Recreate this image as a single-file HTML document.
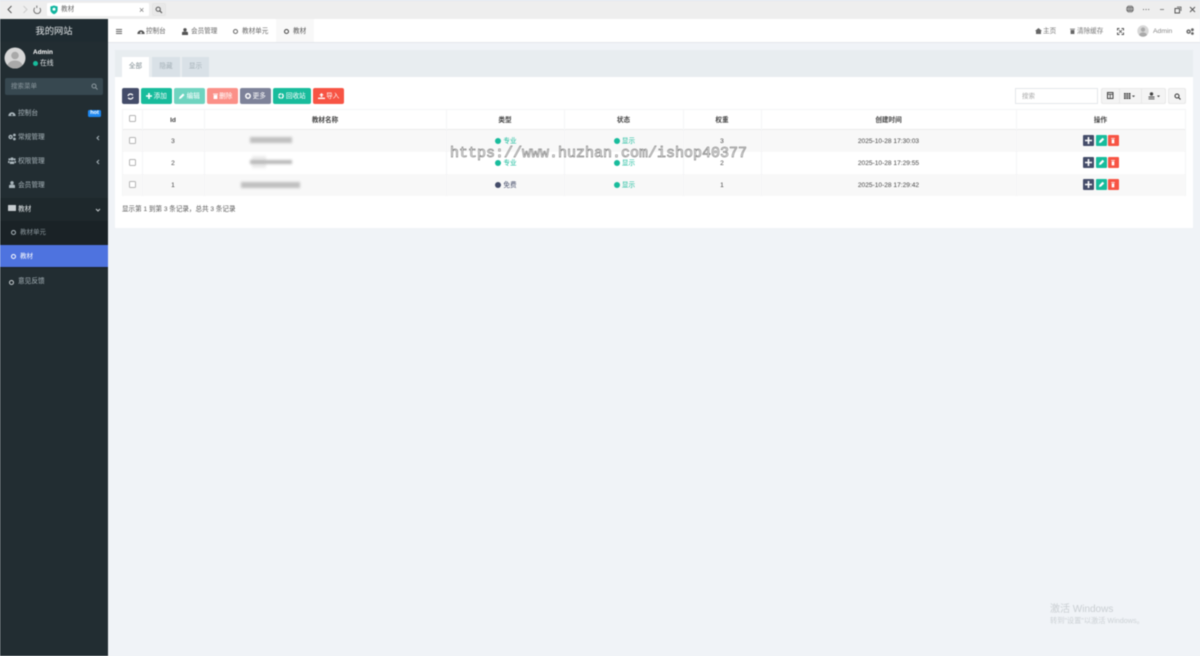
<!DOCTYPE html>
<html lang="zh-CN">
<head>
<meta charset="utf-8">
<title>教材</title>
<style>
html,body{margin:0;padding:0;width:1200px;height:656px;overflow:hidden;background:#f0f3f7}
body{font-family:"Liberation Sans","Noto Sans CJK SC",sans-serif;font-size:6.6px;color:#444;position:relative}
.a{position:absolute;white-space:nowrap}
#root{position:absolute;left:0;top:0;width:1200px;height:656px;filter:blur(.4px)}
.btn{position:absolute;top:88px;height:16px;border-radius:2px;color:#fff;font-size:6.6px;line-height:17px;text-align:center;white-space:nowrap}
.btn svg{display:inline-block;vertical-align:-1px;margin-right:1.5px}
.nav{position:absolute;left:18px;color:#a9b5bb;font-size:6.7px;line-height:10px;white-space:nowrap}
.ico{position:absolute}
.th{position:absolute;top:109px;height:19px;line-height:19px;text-align:center;font-weight:bold;font-size:6.6px;color:#444;padding-top:2px}
.td{position:absolute;text-align:center;font-size:6.6px;color:#444;line-height:10px}
.cb{position:absolute;left:129px;width:5px;height:5px;border:1px solid #b5b5b5;border-radius:1.5px;background:#fff}
.dot{display:inline-block;width:6px;height:6px;border-radius:50%;vertical-align:-.5px;margin-right:2px}
.act{position:absolute;width:11px;height:11px;border-radius:1px}
.vl{position:absolute;top:109px;height:87px;width:1px;background:#f4f5f6}
.blur{position:absolute;background:#c0c0c0;filter:blur(1.2px)}
</style>
</head>
<body>
<div id="root">
<!-- browser bar -->
<div class="a" style="left:0;top:0;width:1200px;height:19px;background:#eeeeee;border-top:1px solid #e3e8f2;box-sizing:border-box"></div>
<svg class="ico" style="left:0;top:0" width="48" height="19" fill="none">
<path d="M11.5 6 L8 9.5 L11.5 13" stroke="#555" stroke-width="1"/>
<path d="M23.5 6 L27 9.5 L23.5 13" stroke="#ccc" stroke-width="1"/>
<path d="M39.8 8 A3.4 3.4 0 1 1 34.8 7.8" stroke="#666" stroke-width=".9"/>
<path d="M36.8 5.6 L36.8 8" stroke="#666" stroke-width=".9"/>
</svg>
<div class="a" style="left:47px;top:3px;width:102px;height:13px;background:#fff;border-radius:1px"></div>
<svg class="ico" style="left:50px;top:5px" width="9" height="10"><path d="M4 .5 L7.6 1.5 L7.6 5 Q7.4 7.8 4 9.3 Q.6 7.8 .4 5 L.4 1.5Z" fill="#12b5a0"/><circle cx="4" cy="4.2" r="1.5" fill="#fff"/></svg>
<div class="a" style="left:61px;top:5px;font-size:6.6px;line-height:10px;color:#666">教材</div>
<div class="a" style="left:139px;top:4px;font-size:9px;line-height:12px;color:#777">×</div>
<div class="a" style="left:152px;top:3px;width:14px;height:13px;background:#e8e8e8;border-radius:2px;border:1px solid #e4e4e4;box-sizing:border-box"></div>
<svg class="ico" style="left:155px;top:6px" width="8" height="8" fill="none"><circle cx="3.2" cy="3.2" r="2.1" stroke="#555"/><path d="M4.8 4.8 L7 7" stroke="#555" stroke-width="1.1"/></svg>
<svg class="ico" style="left:1125px;top:4px" width="10" height="10" fill="none"><circle cx="5" cy="5" r="3.8" fill="#666"/><path d="M1.2 5 H8.8 M5 1.2 V8.8" stroke="#ddd" stroke-width=".5"/><ellipse cx="5" cy="5" rx="1.8" ry="3.8" stroke="#ddd" stroke-width=".5"/></svg>
<div class="a" style="left:1143px;top:8.5px;width:1.2px;height:1.2px;background:#666;box-shadow:2.6px 0 #666,5.2px 0 #666"></div>
<div class="a" style="left:1160px;top:9px;width:4px;height:1px;background:#888"></div>
<svg class="ico" style="left:1174px;top:6px" width="8" height="8" fill="none"><rect x="1" y="2.5" width="4.5" height="4.5" stroke="#555"/><path d="M3 1 H7 V5" stroke="#555" stroke-width=".8"/></svg>
<svg class="ico" style="left:1189px;top:6px" width="8" height="8" fill="none"><path d="M1 1 L6 6 M6 1 L1 6" stroke="#555" stroke-width=".9"/></svg>

<!-- sidebar -->
<div class="a" style="left:0;top:19px;width:108px;height:637px;background:#222d32"></div>
<div class="a" style="left:0;top:19px;width:108px;height:23px;background:#1f2b31;color:#dfe3e5;font-size:9.3px;line-height:25px;text-align:center">我的网站</div>
<svg class="ico" style="left:4px;top:47px" width="22" height="22"><defs><clipPath id="c1"><circle cx="11" cy="11" r="10.5"/></clipPath></defs><circle cx="11" cy="11" r="10.5" fill="#d7d7d7"/><g clip-path="url(#c1)" fill="#a9a9a9"><circle cx="11" cy="8.5" r="3.8"/><ellipse cx="11" cy="19" rx="7.5" ry="5.5"/></g></svg>
<div class="a" style="left:33px;top:48px;color:#fff;font-size:6.4px;line-height:10px;font-weight:bold">Admin</div>
<div class="a" style="left:33px;top:61px;width:5px;height:5px;border-radius:50%;background:#18bc9c"></div>
<div class="a" style="left:40px;top:59px;color:#dfe3e5;font-size:6.8px;line-height:10px">在线</div>
<div class="a" style="left:5px;top:78px;width:98px;height:17px;background:#374850;border-radius:2px"></div>
<div class="a" style="left:11px;top:81.5px;color:#8c989e;font-size:6.5px;line-height:10px">搜索菜单</div>
<svg class="ico" style="left:91px;top:82.5px" width="7" height="7" fill="none"><circle cx="3" cy="3" r="2" stroke="#8c989e"/><path d="M4.5 4.5 L6.5 6.5" stroke="#8c989e"/></svg>

<svg class="ico" style="left:8px;top:109.5px" width="8" height="7"><path d="M.3 6 A3.7 3.7 0 1 1 7.7 6Z" fill="#a9b5bb"/><circle cx="4" cy="4.8" r=".9" fill="#222d32"/></svg>
<div class="nav" style="top:109px">控制台</div>
<div class="a" style="left:88px;top:110px;width:13px;height:7px;background:#1e88f2;border-radius:1.5px;color:#fff;font-size:5.5px;line-height:7px;text-align:center;font-weight:bold">hot</div>

<svg class="ico" style="left:8px;top:133px" width="8" height="8" fill="#a9b5bb"><circle cx="2.6" cy="4" r="2.2"/><circle cx="6.4" cy="2" r="1.4"/><circle cx="6.4" cy="6" r="1.4"/><circle cx="2.6" cy="4" r=".8" fill="#222d32"/></svg>
<div class="nav" style="top:132.5px">常规管理</div>
<svg class="ico" style="left:96px;top:135px" width="4" height="6" fill="none"><path d="M3 1 L1 3 L3 5" stroke="#a9b5bb"/></svg>

<svg class="ico" style="left:8px;top:157px" width="8" height="7" fill="#a9b5bb"><circle cx="4" cy="2" r="1.6"/><circle cx="1.4" cy="2.4" r="1.1"/><circle cx="6.6" cy="2.4" r="1.1"/><path d="M1.8 7 V4.5 H6.2 V7Z"/><rect x="0" y="4" width="1.4" height="2"/><rect x="6.6" y="4" width="1.4" height="2"/></svg>
<div class="nav" style="top:156.5px">权限管理</div>
<svg class="ico" style="left:96px;top:159px" width="4" height="6" fill="none"><path d="M3 1 L1 3 L3 5" stroke="#a9b5bb"/></svg>

<svg class="ico" style="left:9px;top:181px" width="6" height="7" fill="#a9b5bb"><circle cx="3" cy="1.8" r="1.7"/><path d="M0 7 V5 Q0 3.6 1.5 3.6 H4.5 Q6 3.6 6 5 V7Z"/></svg>
<div class="nav" style="top:180.5px">会员管理</div>

<div class="a" style="left:0;top:198px;width:108px;height:70px;background:#1a2226"></div>
<div class="a" style="left:0;top:198px;width:108px;height:23px;background:#1e282c"></div>
<svg class="ico" style="left:8px;top:205px" width="8" height="6"><rect width="8" height="6" rx=".5" fill="#c7cdd0"/></svg>
<div class="nav" style="top:204.5px;color:#e8ecee">教材</div>
<svg class="ico" style="left:95px;top:208px" width="6" height="4" fill="none"><path d="M1 1 L3 3 L5 1" stroke="#c7cdd0"/></svg>
<div class="a" style="left:10.5px;top:229.5px;width:3.6px;height:3.6px;border:1px solid #a9b5bb;border-radius:50%"></div>
<div class="nav" style="left:20px;top:227.5px;color:#8b979d;font-size:6.5px">教材单元</div>
<div class="a" style="left:0;top:245px;width:108px;height:22px;background:#4e73df"></div>
<div class="a" style="left:10.5px;top:253.5px;width:3.6px;height:3.6px;border:1px solid #fff;border-radius:50%"></div>
<div class="nav" style="left:20px;top:251.5px;color:#fff;font-size:6.5px">教材</div>
<div class="a" style="left:8.5px;top:279.5px;width:3.6px;height:3.6px;border:1px solid #c7cdd0;border-radius:50%"></div>
<div class="nav" style="top:277px">意见反馈</div>

<!-- header -->
<div class="a" style="left:108px;top:19px;width:1092px;height:23px;background:#fff;border-bottom:1px solid #e3e7eb;box-sizing:content-box"></div>
<div class="a" style="left:116px;top:29px;width:5.5px;height:1px;background:#666;box-shadow:0 2px #666,0 4px #666"></div>
<svg class="ico" style="left:137px;top:27.5px" width="8" height="7"><path d="M.3 6 A3.7 3.7 0 1 1 7.7 6Z" fill="#555"/><circle cx="4" cy="4.8" r=".9" fill="#fff"/></svg>
<div class="a" style="left:146px;top:27px;line-height:10px;color:#666">控制台</div>
<svg class="ico" style="left:182px;top:27.5px" width="6" height="7" fill="#555"><circle cx="3" cy="1.8" r="1.7"/><path d="M0 7 V5 Q0 3.6 1.5 3.6 H4.5 Q6 3.6 6 5 V7Z"/></svg>
<div class="a" style="left:191px;top:27px;line-height:10px;color:#666">会员管理</div>
<div class="a" style="left:233px;top:29px;width:3.4px;height:3.4px;border:1px solid #666;border-radius:50%"></div>
<div class="a" style="left:242px;top:27px;line-height:10px;color:#666">教材单元</div>
<div class="a" style="left:276px;top:19px;width:38px;height:23px;background:#f8f8f8"></div>
<div class="a" style="left:284px;top:29px;width:3.4px;height:3.4px;border:1px solid #444;border-radius:50%"></div>
<div class="a" style="left:293px;top:27px;line-height:10px;color:#555">教材</div>

<svg class="ico" style="left:1035px;top:28px" width="7" height="6" fill="#666"><path d="M3.5 0 L7 3 H6 V6 H1 V3 H0Z"/></svg>
<div class="a" style="left:1043px;top:27px;line-height:10px;color:#777">主页</div>
<svg class="ico" style="left:1070px;top:28px" width="5" height="6" fill="#666"><path d="M0 .8 H5 V1.5 H0Z M.6 2 H4.4 V6 H.6Z"/></svg>
<div class="a" style="left:1077px;top:27px;line-height:10px;color:#777">清除缓存</div>
<svg class="ico" style="left:1117px;top:28px" width="7" height="7" fill="none" stroke="#555"><path d="M.5 2.5 V.5 H2.5 M4.5 .5 H6.5 V2.5 M6.5 4.5 V6.5 H4.5 M2.5 6.5 H.5 V4.5" stroke-width="1"/><path d="M2 2 L5 5 M5 2 L2 5" stroke-width=".8"/></svg>
<svg class="ico" style="left:1137px;top:25px" width="12" height="12"><defs><clipPath id="c2"><circle cx="6" cy="6" r="5.7"/></clipPath></defs><circle cx="6" cy="6" r="5.7" fill="#d7d7d7"/><g clip-path="url(#c2)" fill="#a9a9a9"><circle cx="6" cy="4.6" r="2.1"/><ellipse cx="6" cy="10.4" rx="4" ry="3"/></g></svg>
<div class="a" style="left:1153px;top:26.5px;line-height:10px;color:#888;font-size:6.8px">Admin</div>
<svg class="ico" style="left:1186px;top:27.5px" width="8" height="7" fill="#666"><circle cx="2.6" cy="3.6" r="2.2"/><circle cx="6.4" cy="1.7" r="1.4"/><circle cx="6.4" cy="5.5" r="1.4"/><circle cx="2.6" cy="3.6" r=".8" fill="#fff"/></svg>

<!-- panel -->
<div class="a" style="left:115px;top:50px;width:1078px;height:178px;background:#fff"></div>
<div class="a" style="left:115px;top:50px;width:1078px;height:27px;background:#e8edf0"></div>
<div class="a" style="left:122px;top:57px;width:27px;height:20px;background:#fff;color:#7d8a90;line-height:20px;text-align:center">全部</div>
<div class="a" style="left:152px;top:57px;width:28px;height:20px;background:#d9e1e7;color:#a3afb6;line-height:20px;text-align:center">隐藏</div>
<div class="a" style="left:182px;top:57px;width:27px;height:20px;background:#d9e1e7;color:#a3afb6;line-height:20px;text-align:center">显示</div>

<div class="btn" style="left:122px;width:17px;background:#444c69"></div>
<svg class="ico" style="left:127px;top:92.5px" width="7" height="7" fill="none" stroke="#fff" stroke-width="1.2"><path d="M1 3 A2.6 2.6 0 0 1 5.8 2.3"/><path d="M6 4 A2.6 2.6 0 0 1 1.2 4.7"/></svg>
<div class="btn" style="left:141px;width:31px;background:#18bc9c"><svg width="6" height="6" fill="#fff"><path d="M2.2 0 H3.8 V2.2 H6 V3.8 H3.8 V6 H2.2 V3.8 H0 V2.2 H2.2Z"/></svg>添加</div>
<div class="btn" style="left:174px;width:31px;background:#6fd4c0"><svg width="6" height="6" fill="#fff"><path d="M0 6 L.5 4 L4 .5 L5.5 2 L2 5.5Z"/></svg>编辑</div>
<div class="btn" style="left:207px;width:31px;background:#fb9088"><svg width="5" height="6" fill="#fff"><path d="M0 .6 H5 V1.4 H0Z M.6 1.9 H4.4 V6 H.6Z"/></svg>删除</div>
<div class="btn" style="left:240px;width:31px;background:#7d8299"><svg width="6" height="6"><circle cx="3" cy="3" r="2.2" fill="none" stroke="#fff" stroke-width="1.5"/></svg>更多</div>
<div class="btn" style="left:273px;width:38px;background:#18bc9c"><svg width="6" height="6"><circle cx="3" cy="3" r="2.2" fill="none" stroke="#fff" stroke-width="1.3" stroke-dasharray="3 .6"/></svg>回收站</div>
<div class="btn" style="left:313px;width:31px;background:#f75444"><svg width="7" height="6" fill="#fff"><path d="M3.5 0 L5.8 2.2 H4.3 V4 H2.7 V2.2 H1.2Z M0 4.6 H7 V6 H0Z"/></svg>导入</div>

<!-- toolbar right -->
<div class="a" style="left:1015px;top:88px;width:83px;height:16px;border:1px solid #e4e7ea;box-sizing:border-box;color:#aaa;line-height:15px;padding-left:6px;background:#fff;font-size:6.5px">搜索</div>
<div class="a" style="left:1101px;top:88px;width:65px;height:16px;background:#f4f4f4;border:1px solid #e8e8e8;box-sizing:border-box;border-radius:2px"></div>
<div class="a" style="left:1119px;top:88px;width:1px;height:16px;background:#e8e8e8"></div>
<div class="a" style="left:1141px;top:88px;width:1px;height:16px;background:#e8e8e8"></div>
<svg class="ico" style="left:1107px;top:92px" width="7" height="7" fill="none" stroke="#444"><rect x=".5" y=".5" width="5.5" height="6"/><path d="M.5 2.3 H6 M3.2 2.3 V6" stroke-width=".8"/></svg>
<svg class="ico" style="left:1124px;top:92.5px" width="12" height="6" fill="#444"><rect width="6.5" height="6"/><path d="M2.1 0 V6 M4.3 0 V6 M0 2 H6.5 M0 4 H6.5" stroke="#f4f4f4" stroke-width=".6"/><path d="M8 2.5 H11 L9.5 4.2Z"/></svg>
<svg class="ico" style="left:1148px;top:91.5px" width="13" height="8" fill="#444"><circle cx="3.5" cy="2" r="1.7"/><path d="M.5 5.5 H6.5 V4.5 H.5Z"/><rect x=".5" y="6.4" width="6" height=".9"/><path d="M9 3.5 H12 L10.5 5.2Z"/></svg>
<div class="a" style="left:1168px;top:88px;width:18px;height:16px;background:#f4f4f4;border:1px solid #e8e8e8;box-sizing:border-box;border-radius:2px"></div>
<svg class="ico" style="left:1174px;top:92.5px" width="7" height="7" fill="none"><circle cx="3" cy="3" r="2" stroke="#333"/><path d="M4.5 4.5 L6.5 6.5" stroke="#333" stroke-width="1.1"/></svg>

<!-- table -->
<div class="a" style="left:122px;top:109px;width:1064px;height:1px;background:#f4f5f6"></div>
<div class="a" style="left:122px;top:129px;width:1064px;height:1px;background:#ebebeb"></div>
<div class="a" style="left:122px;top:130px;width:1064px;height:22px;background:#f8f8f8"></div>
<div class="a" style="left:122px;top:174px;width:1064px;height:22px;background:#f8f8f8"></div>
<div class="vl" style="left:122px"></div><div class="vl" style="left:142px"></div><div class="vl" style="left:204px"></div><div class="vl" style="left:446px"></div><div class="vl" style="left:564px"></div><div class="vl" style="left:683px"></div><div class="vl" style="left:761px"></div><div class="vl" style="left:1016px"></div><div class="vl" style="left:1185px"></div>

<div class="cb" style="top:115px"></div><div class="cb" style="top:137px"></div><div class="cb" style="top:159px"></div><div class="cb" style="top:181px"></div>
<div class="th" style="left:142px;width:62px">Id</div>
<div class="th" style="left:204px;width:242px">教材名称</div>
<div class="th" style="left:446px;width:118px">类型</div>
<div class="th" style="left:564px;width:119px">状态</div>
<div class="th" style="left:683px;width:78px">权重</div>
<div class="th" style="left:761px;width:255px">创建时间</div>
<div class="th" style="left:1016px;width:169px">操作</div>

<div class="td" style="left:142px;width:62px;top:137px">3</div>
<div class="td" style="left:142px;width:62px;top:159px">2</div>
<div class="td" style="left:142px;width:62px;top:181px">1</div>

<div class="blur" style="left:250px;top:137px;width:42px;height:6px"></div>
<div class="blur" style="left:252px;top:156px;width:14px;height:12px;background:#ececec"></div>
<div class="blur" style="left:250px;top:160px;width:42px;height:4px;background:#b8b8b8"></div>
<div class="blur" style="left:241px;top:182px;width:59px;height:6px"></div>

<div class="td" style="left:447px;width:118px;top:137px;color:#18bc9c"><span class="dot" style="background:#18bc9c"></span>专业</div>
<div class="td" style="left:447px;width:118px;top:159px;color:#18bc9c"><span class="dot" style="background:#18bc9c"></span>专业</div>
<div class="td" style="left:447px;width:118px;top:181px;color:#444c69"><span class="dot" style="background:#444c69"></span>免费</div>
<div class="td" style="left:565px;width:119px;top:137px;color:#18bc9c"><span class="dot" style="background:#18bc9c"></span>显示</div>
<div class="td" style="left:565px;width:119px;top:159px;color:#18bc9c"><span class="dot" style="background:#18bc9c"></span>显示</div>
<div class="td" style="left:565px;width:119px;top:181px;color:#18bc9c"><span class="dot" style="background:#18bc9c"></span>显示</div>
<div class="td" style="left:683px;width:78px;top:137px">3</div>
<div class="td" style="left:683px;width:78px;top:159px">2</div>
<div class="td" style="left:683px;width:78px;top:181px">1</div>
<div class="td" style="left:761px;width:255px;top:137px">2025-10-28 17:30:03</div>
<div class="td" style="left:761px;width:255px;top:159px">2025-10-28 17:29:55</div>
<div class="td" style="left:761px;width:255px;top:181px">2025-10-28 17:29:42</div>

<!-- action buttons -->
<div class="act" style="left:1083px;top:135px;background:#444c69"></div><div class="act" style="left:1096px;top:135px;background:#18bc9c"></div><div class="act" style="left:1108px;top:135px;background:#f75444"></div>
<div class="act" style="left:1083px;top:157px;background:#444c69"></div><div class="act" style="left:1096px;top:157px;background:#18bc9c"></div><div class="act" style="left:1108px;top:157px;background:#f75444"></div>
<div class="act" style="left:1083px;top:179px;background:#444c69"></div><div class="act" style="left:1096px;top:179px;background:#18bc9c"></div><div class="act" style="left:1108px;top:179px;background:#f75444"></div>
<svg class="ico" style="left:1083px;top:135px" width="37" height="55" fill="#fff">
<g><path d="M4.7 2 H6.3 V4.7 H9 V6.3 H6.3 V9 H4.7 V6.3 H2 V4.7 H4.7Z"/><path d="M16 8 L16.4 6 L19.6 2.8 L21.2 4.4 L18 7.6Z"/><path d="M28.2 3 H31.8 V3.8 H28.2Z M28.7 4.4 H31.3 V8.4 H28.7Z"/></g>
<g transform="translate(0,22)"><path d="M4.7 2 H6.3 V4.7 H9 V6.3 H6.3 V9 H4.7 V6.3 H2 V4.7 H4.7Z"/><path d="M16 8 L16.4 6 L19.6 2.8 L21.2 4.4 L18 7.6Z"/><path d="M28.2 3 H31.8 V3.8 H28.2Z M28.7 4.4 H31.3 V8.4 H28.7Z"/></g>
<g transform="translate(0,44)"><path d="M4.7 2 H6.3 V4.7 H9 V6.3 H6.3 V9 H4.7 V6.3 H2 V4.7 H4.7Z"/><path d="M16 8 L16.4 6 L19.6 2.8 L21.2 4.4 L18 7.6Z"/><path d="M28.2 3 H31.8 V3.8 H28.2Z M28.7 4.4 H31.3 V8.4 H28.7Z"/></g>
</svg>

<div class="a" style="left:122px;top:205px;line-height:10px;color:#555;font-size:6.55px">显示第 1 到第 3 条记录，总共 3 条记录</div>

<!-- watermarks -->
<div class="a" style="left:450px;top:143px;font-family:'Liberation Mono','Noto Sans CJK SC',monospace;font-size:15px;line-height:22px;color:rgba(255,255,255,.55);-webkit-text-stroke:.7px #8c8c8c">https://www.huzhan.com/ishop40377</div>
<div class="a" style="left:1050px;top:604px;font-size:10px;line-height:12px;color:#c9ced2">激活 Windows</div>
<div class="a" style="left:1050px;top:616px;font-size:7.2px;line-height:10px;color:#ccd1d5">转到"设置"以激活 Windows。</div>
</div>
</body>
</html>
